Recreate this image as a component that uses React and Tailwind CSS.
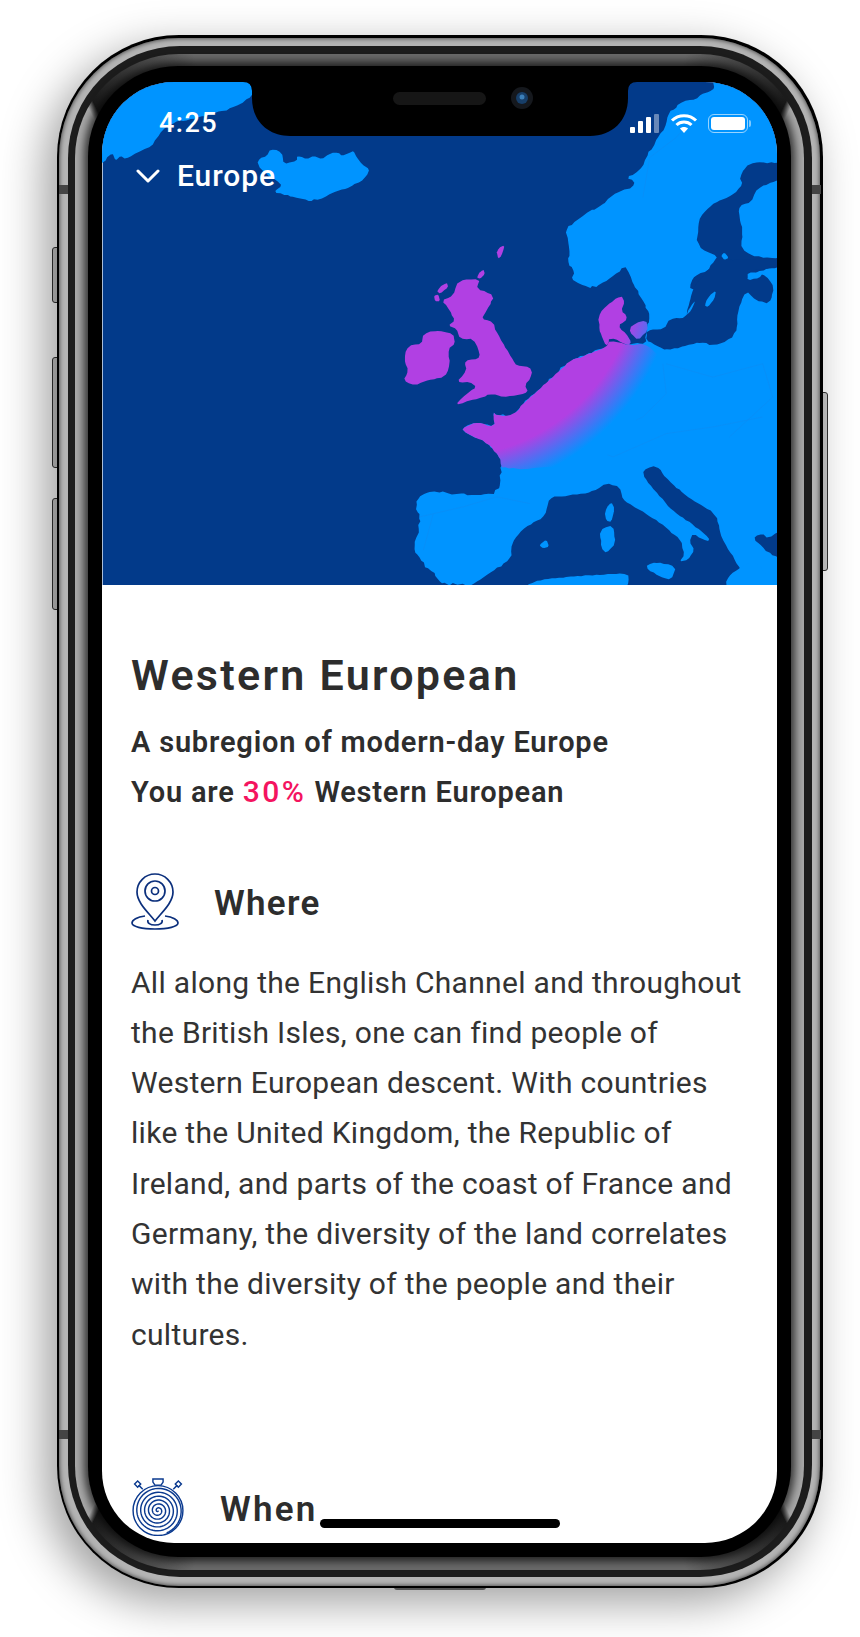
const z2 = (pts) => pts.map(([x, y]) => [430 + x / 3, y / 3]);
const z3 = (pts) => pts.map(([x, y]) => [380 + x / 3, 230 + y / 3]);
const z7 = (pts) => pts.map(([x, y]) => [100 + x / 3, 80 + y / 3]);

// cut corners once, then break each edge up and nudge it so coasts read as coasts
const coast = (pts, amp = 1) => {
  const cut = [];
  pts.forEach((p, i) => {
    const q = pts[(i + 1) % pts.length];
    cut.push([p[0] * 0.8 + q[0] * 0.2, p[1] * 0.8 + q[1] * 0.2]);
    cut.push([p[0] * 0.2 + q[0] * 0.8, p[1] * 0.2 + q[1] * 0.8]);
  });
  let seed = 7;
  const rnd = () => {
    seed = (seed * 9301 + 49297) % 233280;
    return seed / 233280 - 0.5;
  };
  const out = [];
  cut.forEach((p, i) => {
    const q = cut[(i + 1) % cut.length];
    const len = Math.hypot(q[0] - p[0], q[1] - p[1]);
    const n = Math.max(1, Math.round(len / 4));
    for (let k = 0; k < n; k++) {
      const f = k / n;
      const a = k === 0 ? 0 : amp * 2;
      out.push([p[0] + (q[0] - p[0]) * f + rnd() * a, p[1] + (q[1] - p[1]) * f + rnd() * a]);
    }
  });
  return "M" + out.map(([x, y]) => `${x.toFixed(1)} ${y.toFixed(1)}`).join("L") + "Z";
};

const land = [
  ...z2([[850,240],[855,262],[840,272],[815,280],[800,295],[760,300],[735,325],[720,330],[705,385],[690,400],[670,440],[650,470],[630,510],[590,530],[620,550],[575,570],[540,590],[515,615],[480,630],[440,660],[410,680],[415,720],[420,760],[415,790],[435,815],[425,835],[450,850],[490,865],[540,835],[585,795]]),
  ...z3([[750,130],[770,180],[805,235],[810,270],[800,300],[800,340],[750,340],[680,350],[625,372],[570,390],[530,430],[470,485],[440,510],[400,555],[350,555],[340,545],[345,590],[290,575],[245,595],[260,610],[320,635],[360,680],[368,710],[355,790],[290,795],[215,790],[150,782],[108,810],[120,880],[100,960],[130,1000],[200,1075]]),
  [790, 592], [790, 592], [790, 70], [790, 70], [713, 70],
];

const greenland = z7([[445,-10],[455,25],[455,45],[420,70],[380,85],[300,110],[210,125],[165,175],[155,195],[110,215],[75,235],[60,225],[45,240],[35,215],[10,245],[-20,255],[-20,-10]]);
const iceland = z7([[470,240],[500,225],[510,205],[545,215],[550,250],[590,240],[590,225],[620,235],[640,225],[665,235],[685,220],[715,215],[725,225],[750,215],[760,210],[770,230],[785,250],[808,265],[800,285],[770,310],[700,335],[640,362],[610,355],[560,345],[520,335],[545,315],[530,300],[480,265]]);

const bothnia = z2([[960,485],[1070,485],[1070,530],[985,560],[965,605],[930,615],[930,650],[940,700],[935,745],[985,772],[1070,770],[1070,795],[970,815],[940,860],[860,860],[780,870],[790,830],[850,800],[870,770],[800,735],[810,650],[850,610],[915,580],[940,550],[930,530]]);
const baltic = z3([[800,300],[855,295],[870,265],[920,262],[930,215],[945,165],[985,120],[1005,90],[1020,70],[1055,90],[1090,85],[1220,85],[1220,105],[1110,120],[1100,150],[1130,130],[1160,135],[1185,170],[1170,220],[1130,210],[1100,180],[1075,240],[1070,315],[1010,345],[960,335],[920,345],[860,360],[830,345],[800,330]]);
const gotland = z3([[975,225],[990,195],[1010,180],[1005,205],[985,230]]);
const oland = z3([[920,255],[935,225],[948,210],[935,240]]);
const finnIsle = z2([[875,765],[885,755],[898,772],[885,778]]);
const estonia = z3([[1105,125],[1150,128],[1140,142],[1105,150]]);

const med = z3([[235,1090],[330,1030],[395,985],[395,940],[430,895],[495,860],[510,800],[580,795],[640,785],[680,758],[720,770],[730,810],[790,845],[850,885],[905,930],[915,975],[900,995],[925,990],[945,960],[930,935],[940,910],[985,935],[990,925],[950,890],[890,850],[850,810],[795,745],[790,720],[830,705],[860,745],[930,805],[1010,850],[1025,920],[1060,980],[1085,1020],[1090,1090]]);
const aegean = z3([[1120,925],[1150,910],[1165,925],[1220,895],[1220,1000],[1160,960]]);
const corsica = z3([[675,845],[695,815],[705,835],[695,875],[680,872]]);
const sardinia = z3([[660,900],[700,885],[708,940],[680,970],[665,955]]);
const balearic = z3([[478,945],[500,928],[508,950],[490,955]]);
const sicily = z3([[795,1010],[830,995],[890,1010],[875,1050],[840,1040]]);
const africa = z3([[430,1095],[450,1055],[560,1040],[730,1030],[750,1038],[735,1095]]);
const greece = z3([[1040,1045],[1100,1000],[1135,1000],[1165,1040],[1220,1010],[1220,1095],[1040,1095]]);

const britain = z3([[235,150],[300,145],[290,175],[345,195],[320,240],[305,265],[340,275],[355,315],[400,390],[410,405],[450,410],[458,430],[435,465],[445,485],[410,495],[370,500],[340,490],[310,500],[270,510],[225,525],[260,490],[290,470],[270,455],[230,455],[260,420],[255,390],[295,385],[300,370],[280,325],[240,325],[230,295],[205,285],[225,270],[210,240],[185,210],[220,195]]);
const hebrides = z3([[170,180],[200,155],[205,170],[180,190]]);
const lewis = z3([[162,195],[175,192],[180,212],[165,212]]);
const orkney = z3([[290,140],[310,115],[315,130],[300,145]]);
const shetland = z3([[350,60],[375,42],[365,75],[355,85]]);
const ireland = z3([[72,385],[85,345],[125,340],[130,310],[175,300],[220,310],[225,340],[205,355],[210,400],[195,440],[140,450],[105,465],[70,450],[85,420]]);
const denmark = z3([[655,260],[680,225],[725,195],[735,215],[725,240],[745,265],[715,285],[740,310],[755,335],[745,345],[690,320],[680,350],[660,300]]);
const zealand = z3([[755,285],[800,268],[805,300],[775,330],[750,305]]);
const lowlands = z3([[625,372],[680,350],[690,330],[750,345],[800,340],[860,400],[700,700],[368,720],[360,680],[320,635],[260,610],[245,595],[290,575],[345,590],[340,545],[350,555],[400,555],[440,510],[470,485],[530,430],[570,390]]);

const borders = [
  z3([[625,385],[610,430],[590,520],[630,570],[700,600],[790,560],[860,490],[850,400]]),
  z3([[470,490],[590,540],[600,640],[700,680],[860,610],[1000,590],[1150,560]]),
  z3([[120,860],[250,830],[350,800],[450,820]]),
  z3([[130,960],[160,850]]),
  z2([[640,590],[660,470],[740,410],[800,340]]),
  z3([[860,400],[1000,440],[1150,400],[1180,500],[1050,620]]),
];

function MapArt() {
  return (
    <svg viewBox="102 81 675 504" className="block w-full h-full">
      <defs>
        <radialGradient id="westGlow" gradientUnits="userSpaceOnUse" cx="445" cy="262" r="232">
          <stop offset="0.84" stopColor="#b140e3" />
          <stop offset="1" stopColor="#0094ff" />
        </radialGradient>
      </defs>
      <rect x="102" y="81" width="675" height="504" fill="#023a8a" />
      <path d={coast(greenland, 1)} fill="#0094ff" />
      <path d={coast(iceland, 1)} fill="#0094ff" />
      <path d={coast(land, 1.5)} fill="#0094ff" />
      {borders.map((b, i) => (
        <path key={i} d={"M" + b.map(([x, y]) => `${x} ${y}`).join("L")} fill="none" stroke="#0a8df5" strokeWidth="0.7" />
      ))}
      <path d={coast(bothnia, 0.8)} fill="#023a8a" />
      <path d={coast(baltic, 0.8)} fill="#023a8a" />
      <path d={coast(med, 0.6)} fill="#023a8a" />
      <path d={coast(aegean, 1)} fill="#023a8a" />
      {[gotland, oland, finnIsle, estonia, corsica, sardinia, balearic, sicily, africa, greece].map((p, i) => (
        <path key={i} d={coast(p, 0.5)} fill="#0094ff" />
      ))}
      <path d={coast(lowlands, 0.6)} fill="url(#westGlow)" />
      {[britain, hebrides, lewis, orkney, shetland, ireland, denmark, zealand].map((p, i) => (
        <path key={i} d={coast(p, 0.8)} fill="url(#westGlow)" />
      ))}
    </svg>
  );
}

function Notch() {
  return (
    <svg viewBox="240 81 400 56" className="absolute left-[138px] top-0 w-[400px] h-[56px]">
      <path d="M243 81Q252 81 252 90L252 97C252 120 268 135 290 135L590 135C612 135 628 120 628 97L628 90Q628 81 637 81Z" fill="#000" />
      <rect x="393" y="91" width="93" height="13" rx="6.5" fill="#161616" />
      <circle cx="522" cy="97" r="11" fill="#15181d" />
      <circle cx="522" cy="97" r="6" fill="#173e68" />
      <circle cx="522" cy="96" r="2.5" fill="#3c7fb8" />
    </svg>
  );
}

function StatusIcons() {
  return (
    <div className="flex items-end">
      <div className="flex items-end gap-[3px] mr-[11px]">
        <div className="w-[5px] h-[6px] rounded-[1px] bg-white" />
        <div className="w-[5px] h-[12px] rounded-[1px] bg-white" />
        <div className="w-[5px] h-[16px] rounded-[1px] bg-white" />
        <div className="w-[5px] h-[19px] rounded-[1px] bg-white/40" />
      </div>
      <svg viewBox="0 0 27 20" className="w-[28px] h-[20px] mr-[10px]" fill="none" stroke="#fff" strokeWidth="3">
        <path d="M1.5 7.5C8 1 19 1 25.5 7.5" />
        <path d="M6 12C10 8 17 8 21 12" />
        <path d="M13.5 20L9.5 15.5C11.5 13.5 15.500 13.500 17.500 15.500Z" fill="#fff" stroke="none" />
      </svg>
      <div className="w-[40px] h-[19px] rounded-[6px] border border-white/60 p-[2px]">
        <div className="w-full h-full rounded-[3px] bg-white" />
      </div>
      <div className="w-[2px] h-[7px] mb-[6px] ml-[1px] rounded-r-[2px] bg-white/50" />
    </div>
  );
}

function PinIcon() {
  return (
    <svg viewBox="0 0 48 57" className="w-[48px] h-[57px] shrink-0" fill="none" stroke="#0b2f7c" strokeWidth="1.7">
      <path d="M24 48C18 40 6 30 6 19A18 18 0 0 1 42 19C42 30 30 40 24 48Z" />
      <circle cx="24" cy="18" r="10" />
      <circle cx="24" cy="18" r="3.5" />
      <path d="M14 43C6 44 1 47 1 50C1 53.500 11 56 24 56C37 56 47 53.500 47 50C47 47 42 44 34 43" />
      <path d="M17 47C16 50 19 52 24 52C29 52 32 50 31 47" />
    </svg>
  );
}

function spiral() {
  let d = "M26 32";
  const turns = 6;
  for (let i = 1; i <= 300; i++) {
    const f = i / 300;
    const t = f * Math.PI * 2 * turns;
    const r = 0.5 + f * 23;
    d += `L${(26 + r * Math.cos(t + 1.2)).toFixed(2)} ${(32 + r * Math.sin(t + 1.2)).toFixed(2)}`;
  }
  return d;
}

function TimerIcon() {
  return (
    <svg viewBox="0 0 52 57" className="w-[54px] h-[58px] shrink-0" fill="none" stroke="#0b3a8f" strokeWidth="1.4">
      <circle cx="26" cy="32" r="24.500" />
      <path d={spiral()} />
      <path d="M21 1H31V4L29 7H23L21 4Z" />
      <path d="M11 11L7 7M41 11L45 7" />
      <path d="M3 6L6 3L9 6L6 9ZM43 6L46 3L49 6L46 9Z" />
    </svg>
  );
}

export default function App() {
  return (
    <div className="w-[860px] h-[1637px] bg-white overflow-hidden pt-[35px] pl-[56.500px] font-['Roboto',sans-serif]">
      <div className="relative w-[766px] h-[1553px]">
        {/* side buttons */}
        <div className="absolute -left-[5px] top-[212px] flex flex-col gap-[30px]">
          <div className="w-[6px] h-[56px] mb-[24px] rounded-l-[3px] border border-[#333] bg-[#c9c9c9]" />
          <div className="w-[6px] h-[111px] rounded-l-[3px] border border-[#333] bg-[#c9c9c9]" />
          <div className="w-[6px] h-[112px] rounded-l-[3px] border border-[#333] bg-[#c9c9c9]" />
        </div>
        <div className="absolute -right-[5px] top-[357px] w-[6px] h-[179px] rounded-r-[3px] border border-[#333] bg-[#c9c9c9]" />
        <div className="absolute left-[337px] -bottom-[2px] w-[92px] h-[5px] rounded-b-[3px] bg-[#777]" />

        {/* frame */}
        <div className="relative w-full h-full rounded-[122px] bg-black p-[2.500px] shadow-[-12px_14px_45px_rgba(0,0,0,0.38)]">
          <div className="w-full h-full rounded-[120px] bg-[#b4b4b4] p-[8.500px] shadow-[inset_0_0_5px_rgba(0,0,0,0.75)]">
            <div className="w-full h-full rounded-[112px] bg-[#1c1c1c] p-[7.500px]">
              <div className="w-full h-full rounded-[104px] pt-[12px] pb-[13px] px-[13px] bg-[conic-gradient(#6a6a6a_0deg,#6a6a6a_18deg,#1a1a1a_26deg,#a8a8a8_26.500deg,#a8a8a8_153.500deg,#1a1a1a_154deg,#6a6a6a_162deg,#6a6a6a_198deg,#1a1a1a_206deg,#a8a8a8_206.500deg,#a8a8a8_333.500deg,#1a1a1a_334deg,#6a6a6a_342deg,#6a6a6a_360deg)]">
                <div className="w-full h-full rounded-[90px] bg-black pt-[16px] pb-[14px] px-[14px] shadow-[0_0_9px_4px_rgba(0,0,0,0.7)]">
                  <div className="relative w-full h-full rounded-[72px] overflow-hidden bg-white">
                    <div className="h-[503px]">
                      <MapArt />
                    </div>

                    <Notch />
                    {/* status bar and back link over the map */}
                    <div className="absolute inset-x-0 top-0 pl-[34px] pr-[26px] pt-[25px] text-white font-medium">
                      <div className="flex items-start justify-between">
                        <div className="pl-[23px] text-[27px] leading-[32px] tracking-[1.500px]">4:25</div>
                        <div className="pt-[6px]">
                          <StatusIcons />
                        </div>
                      </div>
                      <div className="mt-[17px] flex items-center gap-[17px] text-[30px] leading-[40px] tracking-[0.9px]">
                        <svg viewBox="0 0 24 14" className="w-[24px] h-[14px]" fill="none" stroke="#fff" strokeWidth="3" strokeLinecap="round" strokeLinejoin="round">
                          <path d="M2 2L12 12L22 2" />
                        </svg>
                        Europe
                      </div>
                    </div>

                    <div className="px-[29px] pt-[65px] text-[#2d2d2d]">
                      <h1 className="text-[43px] leading-[50px] font-semibold tracking-[2.300px]">Western European</h1>
                      <p className="mt-[17px] text-[29px] leading-[50px] font-semibold tracking-[0.800px]">A subregion of modern-day Europe</p>
                      <p className="text-[29px] leading-[50px] font-semibold tracking-[0.800px]">
                        You are <span className="text-[#f4145f] font-medium text-[30px] tracking-[2.500px]">30%</span> Western European
                      </p>

                      <div className="mt-[56px] flex items-center gap-[35px]">
                        <PinIcon />
                        <h2 className="pt-[5px] text-[35px] leading-[40px] font-semibold tracking-[1.300px]">Where</h2>
                      </div>
                      <p className="mt-[28px] text-[30px] leading-[50.300px] tracking-[0.300px] text-[#333]">
                        All along the English Channel and throughout<br />
                        the British Isles, one can find people of<br />
                        Western European descent. With countries<br />
                        like the United Kingdom, the Republic of<br />
                        Ireland, and parts of the coast of France and<br />
                        Germany, the diversity of the land correlates<br />
                        with the diversity of the people and their<br />
                        cultures.
                      </p>

                      <div className="mt-[118px] flex items-center gap-[35px]">
                        <TimerIcon />
                        <h2 className="pt-[6px] text-[35px] leading-[40px] font-semibold tracking-[2.200px]">When</h2>
                      </div>
                    </div>

                    <div className="absolute inset-x-0 bottom-[15px] flex justify-center">
                      <div className="w-[240px] h-[9px] rounded-full bg-black" />
                    </div>
                  </div>
                </div>
              </div>
            </div>
          </div>
        </div>

        {/* antenna lines */}
        <div className="absolute inset-x-[2px] top-[150px] flex justify-between">
          <div className="w-[9px] h-[9px] bg-[#444]" />
          <div className="w-[9px] h-[9px] bg-[#444]" />
        </div>
        <div className="absolute inset-x-[2px] top-[1395px] flex justify-between">
          <div className="w-[9px] h-[9px] bg-[#444]" />
          <div className="w-[9px] h-[9px] bg-[#444]" />
        </div>
      </div>
    </div>
  );
}
